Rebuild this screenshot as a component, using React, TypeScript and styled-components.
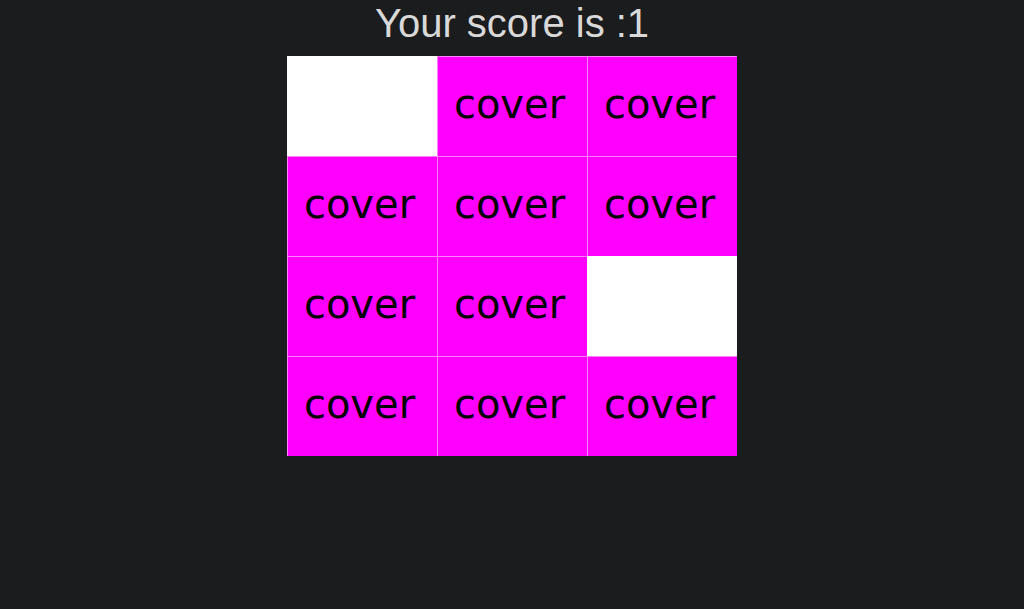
import React from "react";
import styled, { createGlobalStyle } from "styled-components";

const GlobalStyle = createGlobalStyle`
  html, body {
    margin: 0;
    padding: 0;
    background: #1b1c1e;
  }
`;

const Page = styled.div`
  display: flex;
  flex-direction: column;
  align-items: center;
  min-height: 609px;
  background: #1b1c1e;
`;

const Score = styled.h1`
  margin: 0 0 10px;
  font-family: "Liberation Sans", Arial, sans-serif;
  font-weight: 400;
  font-size: 40px;
  line-height: 46px;
  color: #d9d9d9;
`;

const Board = styled.div`
  display: grid;
  grid-template-columns: repeat(3, 150px);
  grid-auto-rows: 100px;
`;

const Card = styled.div<{ $open: boolean }>`
  box-sizing: border-box;
  display: flex;
  align-items: center;
  justify-content: center;
  padding: 0 6px 6px 0;
  border-top: 1px solid ${(p) => (p.$open ? "#ffffff" : "rgba(255,255,255,0.5)")};
  border-left: 1px solid ${(p) => (p.$open ? "#ffffff" : "rgba(255,255,255,0.5)")};
  background: ${(p) => (p.$open ? "#ffffff" : "#ff00ff")};
  font-family: "DejaVu Sans", sans-serif;
  font-size: 40px;
  color: #000;
`;

const cards = [true, false, false, false, false, false, false, false, true, false, false, false];

export default function App() {
  return (
    <>
      <GlobalStyle />
      <Page>
        <Score>Your score is :1</Score>
        <Board>
          {cards.map((open, i) => (
            <Card key={i} $open={open}>
              {open ? "" : "cover"}
            </Card>
          ))}
        </Board>
      </Page>
    </>
  );
}
